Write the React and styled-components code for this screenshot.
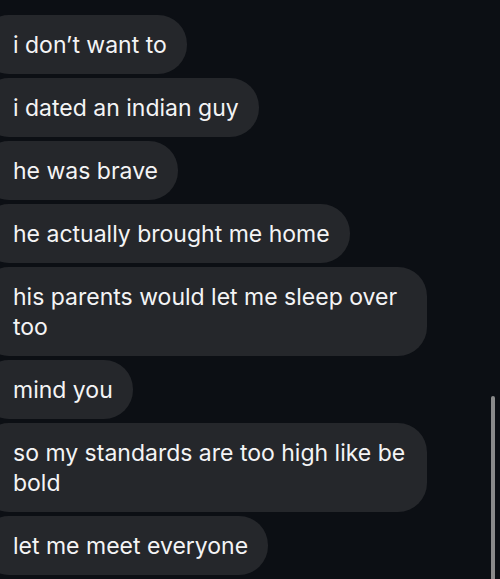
import React from "react";
import styled, { createGlobalStyle } from "styled-components";

const GlobalStyle = createGlobalStyle`
  html, body {
    margin: 0;
    padding: 0;
    background: #0c0f14;
    overflow: hidden;
  }
`;

const Screen = styled.div`
  position: relative;
  width: 500px;
  height: 579px;
  overflow: hidden;
  background: #0c0f14;
  font-family: Inter, "Noto Sans", sans-serif;
`;

const Thread = styled.div`
  display: flex;
  flex-direction: column;
  align-items: flex-start;
  gap: 4px;
  padding-top: 15px;
`;

const Bubble = styled.div`
  margin-left: -20px;
  max-width: 394px;
  padding: 15px 20px 14px 33px;
  background: #25272b;
  border-radius: 29px;
  color: #f4f4f5;
  font-size: 23px;
  line-height: 30px;
`;

const ScrollThumb = styled.div`
  position: absolute;
  right: 5px;
  top: 396px;
  width: 4px;
  height: 200px;
  border-radius: 2px;
  background: #8a8a8a;
`;

const messages = [
  "i don’t want to",
  "i dated an indian guy",
  "he was brave",
  "he actually brought me home",
  "his parents would let me sleep over too",
  "mind you",
  "so my standards are too high like be bold",
  "let me meet everyone",
];

export default function App() {
  return (
    <Screen>
      <GlobalStyle />
      <Thread>
        {messages.map((m) => (
          <Bubble key={m}>{m}</Bubble>
        ))}
      </Thread>
      <ScrollThumb />
    </Screen>
  );
}
